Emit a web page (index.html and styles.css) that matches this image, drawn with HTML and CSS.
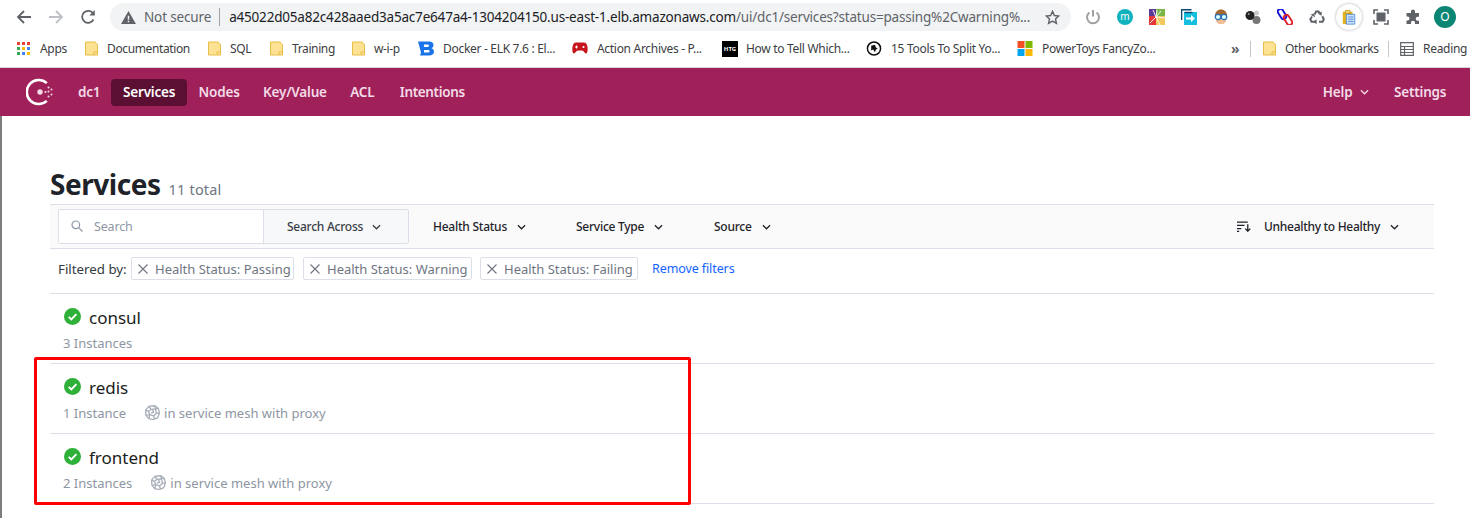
FILE: index.html
```html
<!DOCTYPE html>
<html lang="en">
<head>
<meta charset="utf-8">
<title>Services - Consul</title>
<link rel="stylesheet" href="styles.css">
</head>
<body>
<svg class="defs" width="0" height="0" aria-hidden="true">
  <defs>
    <symbol id="folder" viewBox="0 0 13 14"><path d="M.5.5h9.500l2.500 2.500v10.500H.5z" fill="#fde293" stroke="#e8bd45"/><path d="M9 13.500v-3h3.500" fill="none" stroke="#e8bd45"/></symbol>
    <symbol id="check" viewBox="0 0 16 16"><circle cx="8" cy="8" r="8" fill="#2eb039"/><path d="M4.400 8.300l2.500 2.400 4.800-5" fill="none" stroke="#fff" stroke-width="1.800"/></symbol>
    <symbol id="chev" viewBox="0 0 10 6"><path d="M1 1l4 4 4-4" fill="none" stroke="currentColor" stroke-width="1.400"/></symbol>
    <symbol id="mesh" viewBox="0 0 16 16"><path d="M4.500 1.200L10.500.8l3.700 2.700 1.300 5-2 5-4.500 2-5-1L1 11 .6 5.500zM4.500 1.200l1.800 3.600 4.700-.6-.5-3.400M11 4.200l3.200-.7M11 4.200l1.300 4.600 3.200-.3M12.300 8.800l-3.100 2.900.8 3.500M9.200 11.700l-4-1.500-1 4M5.200 10.200L3.600 6.700l2.700-1.900M3.600 6.700L.6 5.500M5.200 10.200L1 11M8 5l1.200 3-3 .3" fill="none" stroke="#a9afb9" stroke-width="1.400"/></symbol>
    <symbol id="x" viewBox="0 0 10 10"><path d="M.5.5l9 9M9.500.5l-9 9" fill="none" stroke="#6f7682" stroke-width="1.100"/></symbol>
  </defs>
</svg>

<header class="chrome-top">
  <div class="nav-btns">
    <svg class="nb" viewBox="0 0 16 16"><path d="M15 8H2.500M8 2L2 8l6 6" fill="none" stroke="#5f6368" stroke-width="1.800"/></svg>
    <svg class="nb" viewBox="0 0 16 16"><path d="M1 8h12.500M8 2l6 6-6 6" fill="none" stroke="#bdc1c6" stroke-width="1.800"/></svg>
    <svg class="nb" viewBox="0 0 16 16"><path d="M13.500 10.500A6 6 0 1 1 13 4.300" fill="none" stroke="#5f6368" stroke-width="1.800"/><path d="M14.800 1v5.500H9.300z" fill="#5f6368"/></svg>
  </div>
  <div class="omnibox">
    <svg class="warn" viewBox="0 0 16 14"><path d="M8 0l8 14H0z" fill="#5f6368"/><path d="M7.200 5h1.600v4.500H7.200zM7.200 10.500h1.600V12H7.200z" fill="#f1f3f4"/></svg>
    <span class="ns">Not secure</span>
    <span class="omni-sep"></span>
    <span class="url"><b>a45022d05a82c428aaed3a5ac7e647a4-1304204150.us-east-1.elb.amazonaws.com</b>/ui/dc1/services?status=passing%2Cwarning%...</span>
    <svg class="star" viewBox="0 0 16 16"><path d="M8 1.500l2 4.400 4.700.5-3.500 3.200 1 4.700L8 11.900l-4.200 2.400 1-4.700L1.300 6.400 6 5.900z" fill="none" stroke="#5f6368" stroke-width="1.500"/></svg>
  </div>
  <div class="exts">
    <span class="ext"><svg viewBox="0 0 16 16"><path d="M4.500 3.500a6 6 0 1 0 7 0" fill="none" stroke="#a0a0a0" stroke-width="2"/><path d="M8 1v6.500" stroke="#a0a0a0" stroke-width="2"/></svg></span>
    <span class="ext"><span class="m-badge">m</span></span>
    <span class="ext"><svg viewBox="0 0 16 16"><path d="M0 0h7v7H0z" fill="#5b3a95"/><path d="M7 0h9v7H7z" fill="#7ab648"/><path d="M0 7h7v9H0z" fill="#e5383b"/><path d="M7 7h9v9H7z" fill="#f3c85d"/><path d="M7 8L4 1M7 8l1-7M7 8l5-6M7 8L1 14M7 8l4 8M7 8l9 1" stroke="#fff" stroke-width=".9"/></svg></span>
    <span class="ext"><svg viewBox="0 0 16 16"><path d="M.5 11V.8h10" fill="none" stroke="#0b4a73" stroke-width="1.600"/><path d="M3 3h13v13H3z" fill="#14c0de"/><path d="M3.500 3.500h8" stroke="#0b4a73" stroke-width="1.400"/><path d="M5 8.500h5V6l4 3.500-4 3.500v-2.500H5z" fill="#fff"/></svg></span>
    <span class="ext"><svg viewBox="0 0 16 16"><path d="M2 9C1 3 5 .5 8 .5S15 3 14 9z" fill="#a5672e"/><path d="M3 8h10v4.500L10.500 15h-5L3 12.500z" fill="#f0bd94"/><circle cx="5" cy="8" r="2.700" fill="#dff" stroke="#2a6fb8" stroke-width="1.200"/><circle cx="11" cy="8" r="2.700" fill="#dff" stroke="#2a6fb8" stroke-width="1.200"/></svg></span>
    <span class="ext"><svg viewBox="0 0 16 16"><circle cx="11.500" cy="4" r="2.500" fill="#c9c9c9"/><circle cx="11.500" cy="11" r="4" fill="#777"/><circle cx="5" cy="6.500" r="4.500" fill="#222"/><circle cx="3.700" cy="5" r="1" fill="#999"/></svg></span>
    <span class="ext"><svg viewBox="0 0 16 16"><rect x="2.300" y="-.5" width="5.400" height="11" rx="2.700" transform="rotate(-32 5 5)" fill="none" stroke="#1414d8" stroke-width="1.900"/><rect x="8.300" y="5.500" width="5.400" height="11" rx="2.700" transform="rotate(-32 11 11)" fill="none" stroke="#e0202c" stroke-width="1.900"/></svg></span>
    <span class="ext"><svg viewBox="0 0 16 16"><g fill="none" stroke="#5f6368" stroke-width="2"><path d="M5.800 5.300L7 2.400h2.500l1.300 2"/><path d="M13.300 7.300l1.500 3-1.200 2.500H10"/><path d="M6 12.800H2.500L1.300 10.300l1.700-2.800"/></g><path d="M12.800 2.500l-.2 4.200-3.600-2zM7.600 10.300v5l-3.300-2.500zM1.500 5.800l3.800-1.500.6 4z" fill="#5f6368"/></svg></span>
    <span class="ext ext-active"><svg viewBox="0 0 16 18"><path d="M1 3h11v14H1z" fill="#e3b21f"/><path d="M4 1.500h5V5H4z" fill="#f5d86a" stroke="#b98d12" stroke-width=".8"/><path d="M5 6h9.500v11H5z" fill="#cfe2fb" stroke="#4d8bdc"/><path d="M7 9h6M7 11.500h6M7 14h6" stroke="#4d8bdc"/></svg></span>
    <span class="ext"><svg viewBox="0 0 16 16"><path d="M1 5V1h4M11 1h4v4M15 11v4h-4M5 15H1v-4" fill="none" stroke="#5f6368" stroke-width="1.600"/><path d="M3.500 3.500h9v9h-9z" fill="#5f6368"/></svg></span>
    <span class="ext"><svg viewBox="0 0 16 16"><path d="M6 2.500a2 2 0 0 1 4 0V4h4v3.700h-1.300a2 2 0 0 0 0 4H14V15H10v-1.300a2 2 0 0 0-4 0V15H1.500v-3.500h1a2 2 0 0 0 0-4h-1V4H6z" fill="#5f6368"/></svg></span>
    <span class="avatar">O</span>
  </div>
</header>

<nav class="bookmarks">
  <a class="bm"><svg class="apps" viewBox="0 0 13 13"><g><path d="M0 0h3v3H0z" fill="#ea4335"/><path d="M5 0h3v3H5z" fill="#ea4335"/><path d="M10 0h3v3h-3z" fill="#ea4335"/><path d="M0 5h3v3H0z" fill="#34a853"/><path d="M5 5h3v3H5z" fill="#fbbc04"/><path d="M10 5h3v3h-3z" fill="#4285f4"/><path d="M0 10h3v3H0z" fill="#34a853"/><path d="M5 10h3v3H5z" fill="#4285f4"/><path d="M10 10h3v3h-3z" fill="#fbbc04"/></g></svg>Apps</a>
  <a class="bm bf"><svg class="bi"><use href="#folder"/></svg>Documentation</a>
  <a class="bm bf"><svg class="bi"><use href="#folder"/></svg>SQL</a>
  <a class="bm bf"><svg class="bi"><use href="#folder"/></svg>Training</a>
  <a class="bm bf"><svg class="bi"><use href="#folder"/></svg>w-i-p</a>
  <a class="bm"><svg class="bi bw" viewBox="0 0 16 14"><path fill-rule="evenodd" d="M0 0h11c3 0 4.500 1.500 4.500 3.500 0 1.500-.8 2.700-2 3.200 1.500.5 2.500 1.700 2.500 3.300 0 2.500-2 4-5 4H2L3 11 0 0zm6 3l-.1 2.500h3.800c.8 0 1.300-.5 1.300-1.200S10.500 3 9.700 3zm0 5.500V11h4c1 0 1.600-.5 1.600-1.300s-.6-1.200-1.600-1.200z" fill="#1a73e8"/></svg>Docker - ELK 7.6 : El...</a>
  <a class="bm"><svg class="bi bw" viewBox="0 0 16 12"><path d="M4 0h8c2 0 3 1.500 3.500 4.500.4 3-.1 6.500-1.500 6.500-1.500 0-2-3-4-3H6c-2 0-2.500 3-4 3S.1 7.500.5 4.500C1 1.500 2 0 4 0z" fill="#c4161c"/><path d="M3 4.500h3M4.500 3v3" stroke="#fff"/><circle cx="11.500" cy="4.500" r="1.100" fill="#fff"/></svg>Action Archives - P...</a>
  <a class="bm"><span class="htg">HTG</span>How to Tell Which...</a>
  <a class="bm"><svg class="bi bw" viewBox="0 0 16 16"><circle cx="8" cy="8" r="7" fill="#fff" stroke="#111" stroke-width="1.600"/><path d="M5 5l4-1 1 3 2 1-2 1-1 3-2-3-2 1z" fill="#111"/></svg>15 Tools To Split Yo...</a>
  <a class="bm"><svg class="bi bw" viewBox="0 0 15 15"><path d="M0 0h7v7H0z" fill="#f25022"/><path d="M8 0h7v7H8z" fill="#7fba00"/><path d="M0 8h7v7H0z" fill="#00a4ef"/><path d="M8 8h7v7H8z" fill="#ffb900"/></svg>PowerToys FancyZo...</a>
  <span class="more">»</span>
  <span class="bm-sep"></span>
  <a class="bm bf"><svg class="bi"><use href="#folder"/></svg>Other bookmarks</a>
  <span class="bm-sep"></span>
  <a class="bm bm-last"><svg class="bi reading" viewBox="0 0 14 14"><path d="M.7.7h12.600v12.600H.7zM.7 4.500h12.600M.7 7.500h12.600M.7 10.500h12.600M4.500 4.500v8.800" fill="none" stroke="#5f6368" stroke-width="1.200"/></svg>Reading</a>
</nav>

<nav class="app-nav">
  <svg class="logo" viewBox="0 0 28 28">
    <path d="M20.800 5.100a12 12 0 1 0 0 17.800" fill="none" stroke="#fff" stroke-width="2.600"/>
    <circle cx="14" cy="14" r="2.700" fill="#f3dbe6"/>
    <g fill="#f3dbe6"><circle cx="19.500" cy="14" r="1.100"/><circle cx="22.500" cy="9.500" r="1"/><circle cx="25.500" cy="11.500" r="1"/><circle cx="25.500" cy="16.500" r="1"/><circle cx="22.500" cy="13.500" r="1"/><circle cx="22.500" cy="18.500" r="1"/></g>
  </svg>
  <a class="nv dc">dc1</a>
  <a class="nv nv-active">Services</a>
  <a class="nv">Nodes</a>
  <a class="nv">Key/Value</a>
  <a class="nv">ACL</a>
  <a class="nv nv-int">Intentions</a>
  <span class="grow"></span>
  <a class="nv nv-help">Help <svg class="chev-sm"><use href="#chev"/></svg></a>
  <a class="nv">Settings</a>
</nav>

<main class="page">
  <h1 class="title">Services <small>11 total</small></h1>
  <div class="toolbar">
    <div class="search">
      <div class="search-in">
        <svg class="mag" viewBox="0 0 12 12"><circle cx="4.800" cy="4.800" r="3.800" fill="none" stroke="#8e96a3" stroke-width="1.200"/><path d="M7.700 7.700l3.800 3.800" stroke="#8e96a3" stroke-width="1.200"/></svg>
        <span>Search</span>
      </div>
      <div class="search-btn">Search Across <svg class="chev"><use href="#chev"/></svg></div>
    </div>
    <div class="drop d1">Health Status <svg class="chev"><use href="#chev"/></svg></div>
    <div class="drop d2">Service Type <svg class="chev"><use href="#chev"/></svg></div>
    <div class="drop d3">Source <svg class="chev"><use href="#chev"/></svg></div>
    <span class="grow"></span>
    <div class="drop sort">
      <svg class="sort-ic" viewBox="0 0 13 10"><path d="M0 1h10M0 4h7M0 7h4M0 9.500h2" stroke="#1f2329" stroke-width="1.100"/><path d="M10 3v6M7.700 7l2.300 2.400L12.300 7" fill="none" stroke="#1f2329" stroke-width="1.200"/></svg>
      <span class="sort-t">Unhealthy to Healthy</span> <svg class="chev"><use href="#chev"/></svg>
    </div>
  </div>
  <div class="filters">
    <span class="fl">Filtered by:</span>
    <span class="chip c1"><svg class="xi"><use href="#x"/></svg>Health Status: Passing</span>
    <span class="chip c2"><svg class="xi"><use href="#x"/></svg>Health Status: Warning</span>
    <span class="chip c3"><svg class="xi"><use href="#x"/></svg>Health Status: Failing</span>
    <a class="rm">Remove filters</a>
  </div>
  <ul class="list">
    <li class="row">
      <div class="row-h"><svg class="ck"><use href="#check"/></svg><span class="name">consul</span></div>
      <div class="row-m"><span>3 Instances</span></div>
    </li>
    <li class="row">
      <div class="row-h"><svg class="ck"><use href="#check"/></svg><span class="name">redis</span></div>
      <div class="row-m"><span>1 Instance</span><svg class="msh"><use href="#mesh"/></svg><span>in service mesh with proxy</span></div>
    </li>
    <li class="row">
      <div class="row-h"><svg class="ck"><use href="#check"/></svg><span class="name">frontend</span></div>
      <div class="row-m"><span>2 Instances</span><svg class="msh"><use href="#mesh"/></svg><span>in service mesh with proxy</span></div>
    </li>
  </ul>
  <div class="annot"></div>
</main>
</body>
</html>
```
FILE: styles.css
```css
* { box-sizing: border-box; }
html, body { margin: 0; padding: 0; height: 518px; overflow: hidden; background: #fff; }
body { font-family: "Noto Sans", "Open Sans", sans-serif; color: #1f2329; position: relative; }
.defs { position: absolute; }
.grow { flex: 1; }
ul { list-style: none; margin: 0; padding: 0; }

.chrome-top { height: 34px; display: flex; align-items: center; background: #fff; }
.nav-btns { width: 110px; padding-left: 16px; display: flex; gap: 16px; }
.nb { width: 16px; height: 16px; }
.omnibox { width: 961px; height: 28px; border-radius: 14px; background: #f1f3f4; display: flex; align-items: center; padding-left: 11px; font-size: 13.500px; color: #5f6368; }
.warn { width: 15px; height: 13px; margin-right: 8px; }
.ns { white-space: nowrap; letter-spacing: -.15px; }
.omni-sep { width: 1px; height: 18px; background: #9aa0a6; margin: 0 9px 0 8px; }
.url { white-space: nowrap; color: #5f6368; flex: 1; letter-spacing: -.19px; }
.url b { font-weight: 400; color: #202124; }
.star { width: 15px; height: 15px; margin: 0 11px 0 0; }
.exts { display: flex; align-items: center; padding-left: 6px; }
.ext { width: 32px; height: 28px; display: flex; align-items: center; justify-content: center; }
.ext svg { width: 16px; height: 16px; }
.m-badge { width: 16px; height: 16px; border-radius: 50%; background: #10b3bd; color: #fff; font-size: 10px; line-height: 15px; text-align: center; }
.ext-active { position: relative; }
.ext-active::before { content: ""; position: absolute; left: 3px; top: 1px; width: 26px; height: 26px; border-radius: 50%; background: #fff; box-shadow: 0 0 3px rgba(0,0,0,.35); }
.ext-active svg { position: relative; }
.avatar { width: 22px; height: 22px; margin-left: 5px; border-radius: 50%; background: #0b8574; color: #fff; font-size: 12px; line-height: 22px; text-align: center; }

.bookmarks { height: 34px; display: grid; grid-template-columns: 68px 123px 62px 82px 67px 154px 149px 145px 151px 213px 19px 13px 125px 12px 1fr; padding: 0 0 4px 17px; align-items: center; font-size: 12px; color: #3c4043; border-bottom: 1px solid #d8d8d8; white-space: nowrap; overflow: hidden; }
.bm { display: flex; align-items: center; gap: 10px; letter-spacing: -.3px; }
.bf { gap: 9px; letter-spacing: -.38px; }
.apps { width: 13px; height: 13px; }
.bi { width: 13px; height: 15px; flex: none; }
.bw { width: 16px; height: 15px; margin-left: -1px; margin-right: -1px; }
.reading { width: 14px; height: 14px; }
.bm-last { gap: 9px; }
.htg { width: 16px; height: 16px; background: #000; color: #fff; font-size: 6px; font-weight: 700; line-height: 16px; text-align: center; letter-spacing: 0; flex: none; margin-right: -2px; }
.more { font-size: 14px; font-weight: 700; color: #5f6368; line-height: 1; }
.bm-sep { width: 1px; height: 16px; background: #c4c7c9; }

.app-nav { height: 48px; background: #a0215a; display: flex; align-items: center; padding: 0 12px 0 26px; color: #f3dbe6; font-size: 13.500px; font-weight: 600; letter-spacing: -.2px; }
.logo { width: 28px; height: 28px; margin-right: 13px; }
.nv { padding: 0 11.700px; height: 27px; line-height: 26px; border-radius: 4px; white-space: nowrap; display: flex; align-items: center; gap: 8px; }
.nv-active { background: #5b1033; color: #fff; }
.dc { padding: 0 11px; }
.nv-help { padding-right: 13px; }
.nv-int { margin-left: 2px; letter-spacing: -.35px; }
.chev-sm { width: 9px; height: 6px; }

.page { height: 402px; border-left: 2px solid #7d7d7d; padding: 0 36px 0 48px; position: relative; }
.title { margin: 0; height: 88px; padding-top: 48px; font-size: 28px; line-height: 40px; font-weight: 700; letter-spacing: -.45px; color: #1f2329; white-space: nowrap; }
.title small { font-size: 14.500px; font-weight: 400; color: #6f7682; letter-spacing: .2px; margin-left: 1px; }
.toolbar { height: 45px; background: #fafafa; border-top: 1px solid #dcdfe8; border-bottom: 1px solid #dcdfe8; padding-left: 8px; display: flex; align-items: center; font-size: 12px; font-weight: 500; letter-spacing: -.25px; color: #1f2329; }
.search { width: 351px; height: 35px; display: flex; border: 1px solid #dcdfe8; border-radius: 2px; }
.search-in { width: 204px; background: #fff; display: flex; align-items: center; padding-left: 12px; gap: 11px; color: #8e96a3; font-weight: 400; font-size: 12.500px; letter-spacing: -.15px; }
.mag { width: 12px; height: 12px; margin-top: -2px; }
.search-btn { flex: 1; background: #f7f8fa; border-left: 1px solid #dcdfe8; display: flex; align-items: center; padding-left: 23px; gap: 9px; color: #3a3f47; }
.chev { width: 9px; height: 6px; flex: none; }
.drop { display: flex; align-items: center; gap: 10px; white-space: nowrap; }
.d1 { margin-left: 24px; width: 143px; }
.d2 { width: 138px; }
.d3 { width: 100px; }
.sort { padding-right: 35px; letter-spacing: -.3px; }
.sort-ic { width: 14px; height: 11px; margin-right: 3px; }
.filters { height: 45px; border-bottom: 1px solid #dcdfe8; padding: 0 0 5px 8px; display: flex; align-items: center; font-size: 13px; }
.fl { width: 73px; white-space: nowrap; color: #343a42; font-size: 13.300px; }
.chip { height: 23px; border: 1px solid #dcdfe8; border-radius: 2px; display: flex; align-items: center; padding-left: 6px; gap: 7px; color: #6f7682; white-space: nowrap; margin-right: 9px; overflow: hidden; }
.c1 { width: 163px; }
.c2 { width: 169px; margin-right: 8px; }
.c3 { width: 158px; margin-right: 14px; }
.xi { width: 10px; height: 10px; flex: none; }
.rm { color: #1563ff; white-space: nowrap; font-size: 12.500px; letter-spacing: -.1px; }
.row { height: 70px; border-bottom: 1px solid #dcdfe8; padding: 12px 0 0 13px; }
.row-h { display: flex; align-items: center; height: 22px; }
.ck { width: 17px; height: 17px; margin: -2px 8px 0 1px; flex: none; }
.name { font-size: 17px; color: #1a1d21; line-height: 22px; margin-top: 1px; }
.row-m { display: flex; align-items: center; margin-top: 6px; font-size: 13px; color: #8e96a3; height: 18px; white-space: nowrap; }
.msh { width: 15px; height: 15px; margin: -2px 4px 0 19px; flex: none; }
.annot { position: absolute; left: 32px; top: 241px; width: 657px; height: 148px; border: 3px solid #f00; border-radius: 2px; }
```
